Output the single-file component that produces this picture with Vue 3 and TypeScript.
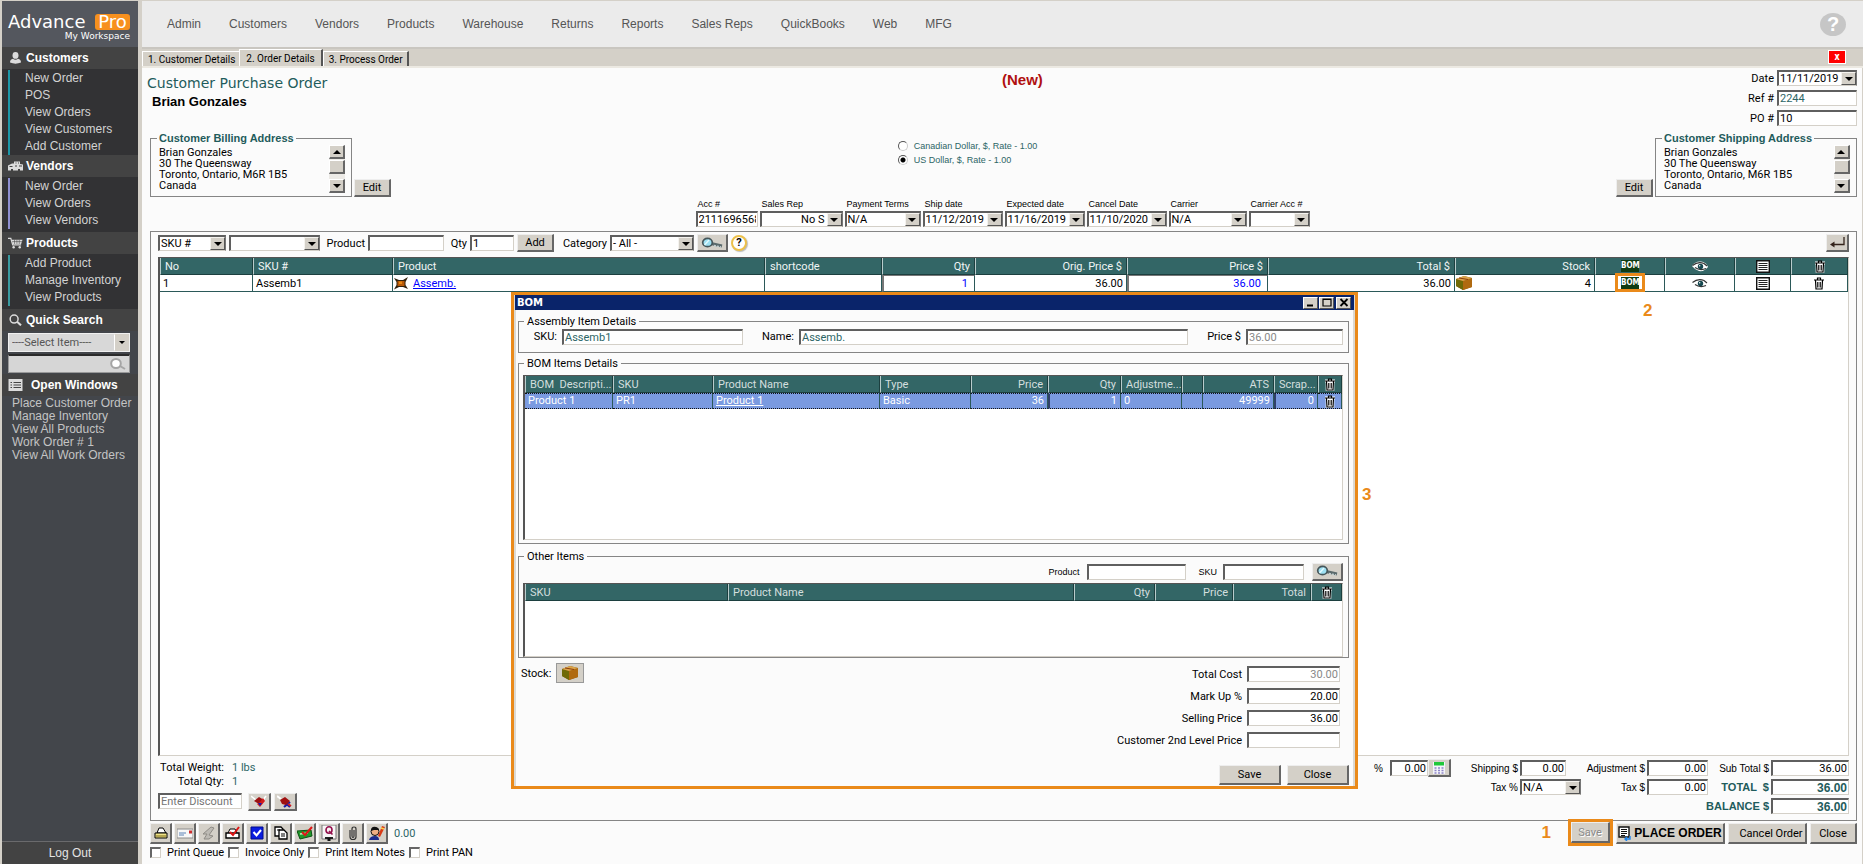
<script setup lang="ts">
import { ref } from 'vue'

interface MenuGroup { title: string; icon: string; tone: string; items: string[] }
interface HeadField { id: string; label: string; value: string; width: number; combo: boolean; right?: boolean }
interface Column { label: string; width?: number; right?: boolean; icon?: string }

const navItems: string[] = ['Admin', 'Customers', 'Vendors', 'Products', 'Warehouse', 'Returns', 'Reports', 'Sales Reps', 'QuickBooks', 'Web', 'MFG']

const groups: MenuGroup[] = [
  { title: 'Customers', icon: 'i-person', tone: 'teal', items: ['New Order', 'POS', 'View Orders', 'View Customers', 'Add Customer'] },
  { title: 'Vendors', icon: 'i-vendor', tone: 'violet', items: ['New Order', 'View Orders', 'View Vendors'] },
  { title: 'Products', icon: 'i-cart', tone: 'aqua', items: ['Add Product', 'Manage Inventory', 'View Products'] },
]

const openWindows: string[] = ['Place Customer Order', 'Manage Inventory', 'View All Products', 'Work Order # 1', 'View All Work Orders']

const address: string = ['Brian Gonzales', '30 The Queensway', 'Toronto, Ontario, M6R 1B5', 'Canada'].join('\n')

const headFields: HeadField[] = [
  { id: 'acc', label: 'Acc #', value: '2111696568', width: 62, combo: false },
  { id: 'rep', label: 'Sales Rep', value: 'No S', width: 83, combo: true, right: true },
  { id: 'terms', label: 'Payment Terms', value: 'N/A', width: 76, combo: true },
  { id: 'ship', label: 'Ship date', value: '11/12/2019', width: 80, combo: true },
  { id: 'expected', label: 'Expected date', value: '11/16/2019', width: 80, combo: true },
  { id: 'cancel', label: 'Cancel Date', value: '11/10/2020', width: 80, combo: true },
  { id: 'carrier', label: 'Carrier', value: 'N/A', width: 78, combo: true },
  { id: 'carrieracc', label: 'Carrier Acc #', value: '', width: 61, combo: true },
]

const orderCols: Column[] = [
  { label: 'No', width: 93 }, { label: 'SKU #', width: 140 }, { label: 'Product' }, { label: 'shortcode', width: 117 },
  { label: 'Qty', width: 93, right: true }, { label: 'Orig. Price $', width: 152, right: true }, { label: 'Price $', width: 141, right: true },
  { label: 'Total $', width: 187, right: true }, { label: 'Stock', width: 140, right: true }, { label: 'BOM', width: 70, icon: 'bom' },
  { label: '', width: 70, icon: 'i-eye' }, { label: '', width: 56, icon: 'i-list' }, { label: '', width: 57, icon: 'i-trash' },
]

const bomCols: Column[] = [
  { label: 'BOM  Descripti...', width: 88 }, { label: 'SKU', width: 100 }, { label: 'Product Name' }, { label: 'Type', width: 91 },
  { label: 'Price', width: 77, right: true }, { label: 'Qty', width: 73, right: true }, { label: 'Adjustme...', width: 61 }, { label: '', width: 21 },
  { label: 'ATS', width: 71, right: true }, { label: 'Scrap...', width: 44, right: true }, { label: '', width: 24, icon: 'i-trash' },
]

const otherCols: Column[] = [
  { label: 'SKU', width: 203 }, { label: 'Product Name' }, { label: 'Qty', width: 81, right: true },
  { label: 'Price', width: 78, right: true }, { label: 'Total', width: 78, right: true }, { label: '', width: 31, icon: 'i-trash' },
]

const costs = [
  { id: 'cost', label: 'Total Cost', value: '30.00', off: true },
  { id: 'markup', label: 'Mark Up %', value: '20.00', off: false },
  { id: 'selling', label: 'Selling Price', value: '36.00', off: false },
  { id: 'second', label: 'Customer 2nd Level Price', value: '', off: false },
]

const tools: string[] = ['t-print', 't-mail', 't-edit', 't-printx', 't-check', 't-copy', 't-money', 't-query', 't-clip', 't-user']
const prints: string[] = ['Print Queue', 'Invoice Only', 'Print Item Notes', 'Print PAN']
const currency = ref<string>('usd')
</script>

<template>
  <svg class="defs" aria-hidden="true">
    <symbol id="i-person" viewBox="0 0 12 12"><ellipse cx="6" cy="3.4" rx="3" ry="3.4" /><path d="M0.500 10.500Q0.500 7.200 3.500 6.800Q6 8.500 8.500 6.800Q11.500 7.200 11.500 10.500Q6 12.800 0.500 10.500Z" /></symbol>
    <symbol id="i-vendor" viewBox="0 0 15 11"><path d="M0 5L4 3H6V1H12V3.500L15 4V10H12V8.500H10V10H5V8.500H3V10H0Z" /><path d="M7.500 2.500h1M10 2.500h1M1.500 6h3M7 5.500h2M11 5.500h3" stroke="#434343" fill="none" /></symbol>
    <symbol id="i-cart" viewBox="0 0 16 12"><path d="M0 1H3L5 8H14" stroke="currentColor" stroke-width="1.300" fill="none" /><path d="M4 2.500H15.500L14 7H5Z" /><path d="M7 2.500V7M9.500 2.500V7M12 2.500V7M4.500 4.500H15" stroke="#434343" stroke-width=".6" /><circle cx="6" cy="10.500" r="1.300" /><circle cx="12.500" cy="10.500" r="1.300" /></symbol>
    <symbol id="i-find" viewBox="0 0 14 13"><circle cx="5.500" cy="5.500" r="4.300" fill="none" stroke="currentColor" stroke-width="1.600" /><path d="M8.700 8.500L13 12.300" stroke="currentColor" stroke-width="2.200" /></symbol>
    <symbol id="i-quick" viewBox="0 0 16 12"><ellipse cx="6" cy="5.500" rx="4.800" ry="4.500" fill="#fff" stroke="#a5a5a5" stroke-width="2" /><path d="M10 8L15 11" stroke="#a5a5a5" stroke-width="2" /></symbol>
    <symbol id="i-windows" viewBox="0 0 14 12"><path d="M0 0H14V12H0Z" /><path d="M2 3.500h1.500M5 3.500h7.500M2 6h1.500M5 6h7.500M2 8.500h1.500M5 8.500h7.500" stroke="#444" stroke-width="1.200" /></symbol>
    <symbol id="i-trash" viewBox="0 0 11 13"><path d="M0.500 1.500H10.500V4.500H9.800V12.800H1.200V4.500H0.500Z" fill="#fff" /><path d="M0.500 3H10.500M4 2.500V1H7V2.500M2 3.500L2.500 12H8.500L9 3.500M4.300 5V10.500M6.700 5V10.500" fill="none" stroke="#000" stroke-width="1.200" /></symbol>
    <symbol id="i-eye" viewBox="0 0 16 11"><path d="M0 5Q3 0 9 0.500Q14 1 16 6Q12 11 7 10Q3 9 0 5Z" fill="#fff" /><path d="M0.500 4.500Q6 0 12 2.500L15 5M3 6.500Q8 10 14 7.500" fill="none" stroke="#333" stroke-width="1.200" /><circle cx="8.500" cy="5.500" r="2.700" fill="#16484f" /><circle cx="7.700" cy="4.700" r=".7" fill="#fff" /></symbol>
    <symbol id="i-list" viewBox="0 0 14 13"><path d="M.7 .7H13.300V12.300H.7Z" fill="#fff" stroke="#111" stroke-width="1.400" /><path d="M2.500 3.500h9M2.500 5.500h9M2.500 7.500h9M2.500 9.500h9" stroke="#222" /></symbol>
    <symbol id="i-box" viewBox="0 0 16 14"><path d="M0 3L8 0L16 2V11L7 14L0 10Z" fill="#8a5a0c" /><path d="M0 3L7 5V14L0 10Z" fill="#6f6a08" /><path d="M7 5L16 2V11L7 14Z" fill="#b06a10" /><path d="M0 3L8 0L16 2L7 5Z" fill="#dca54c" /><path d="M3 2L12 3.500" stroke="#8a3d0c" /></symbol>
    <symbol id="i-burst" viewBox="0 0 14 13"><path d="M0 1L5 3H9L14 0L11.500 5V8L14 12L9 10H5L0 12.500L2.500 8V5Z" fill="#32210c" /><path d="M3.500 4H10.500V9H3.500Z" fill="#b95a08" /><path d="M5 4.500H8V7H5Z" fill="#e88712" /></symbol>
    <symbol id="i-lens" viewBox="0 0 22 12"><path d="M10 6.500L21 9" stroke="#5b6a6c" stroke-width="3" /><path d="M13 8.500L20 10" stroke="#c5d1d2" stroke-width="1.500" stroke-dasharray="2 1" /><ellipse cx="6.500" cy="5.500" rx="4.800" ry="4.200" fill="#9ee0f2" stroke="#46565a" stroke-width="1.700" /><path d="M3.500 8L8 3" stroke="#e4fbff" stroke-width="1.300" /></symbol>
    <symbol id="i-return" viewBox="0 0 16 11"><path d="M15 0V7.500H3" fill="none" stroke="#33231b" stroke-width="1.300" /><path d="M5.500 4.500L1 7.500L5.500 10.500Z" fill="#33231b" /></symbol>
    <symbol id="i-tag1" viewBox="0 0 16 13"><path d="M0 1L5 5M15 1L12 5" stroke="#fff" stroke-width="1.600" /><path d="M3 6L8 2L13 5L8 9Z" fill="#9b1010" /><path d="M6 9L9 12L14 6L12 3L9 7Z" fill="#d41b1b" /><path d="M7 8L9 11L11 8Z" fill="#1818ae" /></symbol>
    <symbol id="i-tag2" viewBox="0 0 16 13"><path d="M0 1L4 4" stroke="#fff" stroke-width="2" /><path d="M7 7L13 12M13 7L7 12" stroke="#1b1ba5" stroke-width="2.200" /><path d="M3 5L8 2L13 6L9 10L5 9Z" fill="#a01010" /><path d="M11 9L14 11" stroke="#d41b1b" stroke-width="2" /></symbol>
    <symbol id="i-calc" viewBox="0 0 12 12"><path d="M0 0H12V12H0Z" fill="#f4f4fa" /><path d="M1 0H11V3.500H1Z" fill="#1fc83a" /><path d="M1.500 6H10.500M1.500 8.500H10.500M1.500 11H10.500" stroke="#8e86c8" stroke-width="1.500" stroke-dasharray="2 1.500" /></symbol>
    <symbol id="i-order" viewBox="0 0 13 15"><path d="M1 1H11V11H1Z" fill="#fff" stroke="#111" stroke-width="1.400" /><path d="M3 3.500h6M3 5.500h6M3 7.500h6M3 9.500h4" stroke="#111" /><path d="M12 10V13H7M9 11L7 13L9 15" fill="none" stroke="#1d83ea" stroke-width="1.400" /></symbol>
    <symbol id="t-print" viewBox="0 0 16 16"><path d="M4 8L6 3H10L13 8Z" fill="#fff" stroke="#000" /><path d="M2 8H14V13H2Z" fill="#efe388" stroke="#000" /><path d="M3 11h10" stroke="#7d6b18" /></symbol>
    <symbol id="t-mail" viewBox="0 0 16 16"><path d="M0 4H16V13H0Z" fill="#f7f7f7" stroke="#8c8c8c" /><path d="M2 8h7M2 10h5" stroke="#5b82b6" /><path d="M12 5.500h3v3h-3Z" fill="#cc2f2f" /></symbol>
    <symbol id="t-edit" viewBox="0 0 16 16"><path d="M2 9L10 2L13 3L8 10L12 11L8 14H3L6 9Z" fill="#bdbab4" stroke="#8f8c86" /></symbol>
    <symbol id="t-printx" viewBox="0 0 16 16"><path d="M3 8L5 4H10L12 8" fill="#fff" stroke="#000" /><path d="M1 8H14V13H1Z" fill="#fff" stroke="#000" stroke-width="1.400" /><path d="M5 7L8 10L14 2" fill="none" stroke="#dd1515" stroke-width="2" /></symbol>
    <symbol id="t-check" viewBox="0 0 16 16"><path d="M2 2H14V14H2Z" fill="#0a1de0" stroke="#000b8c" /><path d="M4.500 7L7.500 10.500L12 5" fill="none" stroke="#fff" stroke-width="2" /></symbol>
    <symbol id="t-copy" viewBox="0 0 16 16"><path d="M2 2H8L10 4V11H2Z" fill="#fff" stroke="#000" stroke-width="1.300" /><path d="M6 5H11L14 8V14H6Z" fill="#fff" stroke="#000" stroke-width="1.300" /><path d="M8 9h4M8 11h4M4 5h3" stroke="#000" /></symbol>
    <symbol id="t-money" viewBox="0 0 16 16"><path d="M0 6L14 5L15 11L3 14Z" fill="#1f9a2a" stroke="#0b5312" /><path d="M3 9L11 8" stroke="#c6ecc0" stroke-width="1.600" /><path d="M5 7L8 10L15 2" fill="none" stroke="#dd1515" stroke-width="2" /></symbol>
    <symbol id="t-query" viewBox="0 0 16 16"><path d="M1 0H15V14H1Z" fill="#f8f6f6" stroke="#777" /><ellipse cx="8" cy="5" rx="3" ry="3.200" fill="none" stroke="#94104c" stroke-width="1.600" /><path d="M8 6L11.500 9.500" stroke="#94104c" stroke-width="1.600" /><path d="M4 12H12V14H4Z" fill="#222" /><path d="M8 13v3" stroke="#111" stroke-width="3" /></symbol>
    <symbol id="t-clip" viewBox="0 0 16 16"><path d="M5 5V12Q5 14.500 8 14.500Q11 14.500 11 12V4Q11 2 9 2Q7 2 7 4V11Q7 12.500 8 12.500Q9 12.500 9 11V5" fill="none" stroke="#333" stroke-width="1.200" /></symbol>
    <symbol id="t-user" viewBox="0 0 16 16"><ellipse cx="6" cy="6.500" rx="4" ry="4" fill="#f0b083" stroke="#111" /><path d="M2 6Q2 1 7 2Q10 3 10 5L5 5Z" fill="#111" /><path d="M0 15Q1 11 6 11Q10 11 10 15Z" fill="#1c2c8e" /><path d="M9 11L13 1L16 2L11 12Z" fill="#d93a16" /><path d="M12 3L15 4" stroke="#ffd24a" stroke-width="1.500" /></symbol>
  </svg>

  <div class="app">
    <aside class="side">
      <header class="brand">
        <div class="logo">Advance<span class="pro">Pro</span></div>
        <div class="workspace">My Workspace</div>
      </header>
      <section v-for="g in groups" :key="g.title">
        <h2 class="side-head"><svg class="side-icon"><use :href="'#' + g.icon" /></svg>{{ g.title }}</h2>
        <ul class="menu" :class="g.tone">
          <li v-for="item in g.items" :key="item"><a href="#">{{ item }}</a></li>
        </ul>
      </section>
      <h2 class="side-head"><svg class="side-icon"><use href="#i-find" /></svg>Quick Search</h2>
      <div class="quick">
        <span class="combo quick-combo"><select aria-label="Quick search type"><option>----Select Item----</option></select><i class="arrow" /></span>
        <div class="quick-text"><input type="text" aria-label="Quick search text"><svg><use href="#i-quick" /></svg></div>
      </div>
      <h2 class="side-head windows-head"><svg class="side-icon"><use href="#i-windows" /></svg>Open Windows</h2>
      <ul class="windows"><li v-for="w in openWindows" :key="w"><a href="#">{{ w }}</a></li></ul>
      <button class="logout">Log Out</button>
    </aside>

    <main class="main">
      <nav class="nav">
        <a v-for="n in navItems" :key="n" href="#">{{ n }}</a>
        <button class="help" aria-label="Help">?</button>
      </nav>
      <div class="tabs">
        <button class="tab">1. Customer Details</button>
        <button class="tab active">2. Order Details</button>
        <button class="tab last">3. Process Order</button>
        <button class="tab-close" aria-label="Close tab">x</button>
      </div>

      <div class="page">
        <div class="top">
          <div class="titles"><h1>Customer Purchase Order</h1><strong>Brian Gonzales</strong></div>
          <div class="status">(New)</div>
          <div class="refs">
            <label for="date">Date</label><span class="combo"><select id="date"><option>11/11/2019</option></select><i class="arrow" /></span>
            <label for="ref">Ref #</label><input id="ref" class="box teal-text" type="text" value="2244">
            <label for="po">PO #</label><input id="po" class="box" type="text" value="10">
          </div>
        </div>

        <div class="addresses">
          <div class="address">
            <fieldset class="group">
              <legend>Customer Billing Address</legend>
              <div class="address-body"><textarea aria-label="Billing address" readonly :value="address" /><div class="scroll"><i class="up" /><b /><i class="down" /></div></div>
            </fieldset>
            <button class="btn edit">Edit</button>
          </div>
          <div class="currencies">
            <label><input v-model="currency" type="radio" value="cad">Canadian Dollar, $, Rate - 1.00</label>
            <label><input v-model="currency" type="radio" value="usd">US Dollar, $, Rate - 1.00</label>
          </div>
          <div class="address">
            <button class="btn edit">Edit</button>
            <fieldset class="group">
              <legend>Customer Shipping Address</legend>
              <div class="address-body"><textarea aria-label="Shipping address" readonly :value="address" /><div class="scroll"><i class="up" /><b /><i class="down" /></div></div>
            </fieldset>
          </div>
        </div>

        <div class="head-fields">
          <div v-for="f in headFields" :key="f.id" :style="{ width: f.width + 'px' }">
            <label :for="f.id">{{ f.label }}</label>
            <span v-if="f.combo" class="combo"><select :id="f.id" :class="{ right: f.right }"><option>{{ f.value }}</option></select><i class="arrow" /></span>
            <input v-else :id="f.id" class="box" type="text" :value="f.value">
          </div>
        </div>

        <section class="order">
          <div class="filter">
            <span class="combo"><select aria-label="Search field"><option>SKU #</option></select><i class="arrow" /></span>
            <span class="combo"><select aria-label="Search value"><option /></select><i class="arrow" /></span>
            <label for="product">Product</label><input id="product" class="box" type="text">
            <label for="qty">Qty</label><input id="qty" class="box" type="text" value="1">
            <button class="btn">Add</button>
            <label for="category">Category</label>
            <span class="combo"><select id="category"><option>- All -</option></select><i class="arrow" /></span>
            <button class="btn" aria-label="Search"><svg class="lens"><use href="#i-lens" /></svg></button>
            <button class="hint" aria-label="Hint">?</button>
            <button class="btn return" aria-label="Enter"><svg><use href="#i-return" /></svg></button>
          </div>

          <div class="grid-wrap">
            <table class="grid">
              <colgroup><col v-for="(c, i) in orderCols" :key="i" :style="c.width ? { width: c.width + 'px' } : {}"></colgroup>
              <thead>
                <tr>
                  <th v-for="(c, i) in orderCols" :key="i" :class="{ right: c.right, mid: c.icon }">
                    <span v-if="c.icon === 'bom'" class="bom">BOM</span>
                    <svg v-else-if="c.icon" class="cell-icon"><use :href="'#' + c.icon" /></svg>
                    <template v-else>{{ c.label }}</template>
                  </th>
                </tr>
              </thead>
              <tbody>
                <tr>
                  <td>1</td><td>Assemb1</td>
                  <td><span class="product"><svg><use href="#i-burst" /></svg><a href="#">Assemb.</a></span></td>
                  <td /><td class="right blue sunk">1</td><td class="right">36.00</td><td class="right blue sunk">36.00</td><td class="right">36.00</td>
                  <td><span class="stock"><svg><use href="#i-box" /></svg>4</span></td>
                  <td class="mid callout-cell"><span class="callout"><span class="bom">BOM</span></span><span class="mark mark-two">2</span></td>
                  <td class="mid"><svg class="cell-icon"><use href="#i-eye" /></svg></td>
                  <td class="mid"><svg class="cell-icon"><use href="#i-list" /></svg></td>
                  <td class="mid"><svg class="cell-icon"><use href="#i-trash" /></svg></td>
                </tr>
              </tbody>
            </table>
          </div>

          <div class="summary">
            <div class="weights">
              <dl><dt>Total Weight:</dt><dd>1 lbs</dd><dt>Total Qty:</dt><dd>1</dd></dl>
              <div class="discount">
                <input class="box" type="text" placeholder="Enter Discount" aria-label="Discount">
                <button class="btn" aria-label="Apply discount"><svg><use href="#i-tag1" /></svg></button>
                <button class="btn" aria-label="Remove discount"><svg><use href="#i-tag2" /></svg></button>
              </div>
            </div>
            <div class="totals">
              <label for="pct">%</label><input id="pct" class="box" type="text" value="0.00">
              <button class="btn calc" aria-label="Calculate"><svg><use href="#i-calc" /></svg></button>
              <label for="shipping">Shipping $</label><input id="shipping" class="box short" type="text" value="0.00">
              <label for="adj">Adjustment $</label><input id="adj" class="box" type="text" value="0.00">
              <label for="sub">Sub Total $</label><input id="sub" class="box" type="text" value="36.00">
              <label class="tax-rate" for="taxp">Tax %</label><span class="combo"><select id="taxp"><option>N/A</option></select><i class="arrow" /></span>
              <label for="tax">Tax $</label><input id="tax" class="box" type="text" value="0.00">
              <label class="strong total-label" for="total">TOTAL &nbsp;$</label><input id="total" class="box strong" type="text" value="36.00">
              <label class="strong balance" for="balance">BALANCE $</label><input id="balance" class="box strong" type="text" value="36.00">
            </div>
          </div>
        </section>

        <footer class="footer">
          <div>
            <div class="tools">
              <button v-for="t in tools" :key="t" class="btn" :aria-label="t.slice(2)"><svg><use :href="'#' + t" /></svg></button>
              <output>0.00</output>
            </div>
            <div class="prints"><label v-for="p in prints" :key="p"><input type="checkbox">{{ p }}</label></div>
          </div>
          <div class="actions">
            <span class="mark">1</span>
            <span class="callout save-callout"><button class="btn" disabled>Save</button></span>
            <button class="btn place"><svg><use href="#i-order" /></svg>PLACE ORDER</button>
            <button class="btn cancel">Cancel Order</button>
            <button class="btn close">Close</button>
          </div>
        </footer>
      </div>
    </main>

    <section class="dialog" role="dialog" aria-label="BOM">
      <span class="mark mark-three">3</span>
      <header class="titlebar">
        <span>BOM</span>
        <button class="win" aria-label="Minimize"><svg viewBox="0 0 10 9"><path d="M1 7.500H7" stroke="#000" stroke-width="2" /></svg></button>
        <button class="win" aria-label="Maximize"><svg viewBox="0 0 10 9"><path d="M1 1H9V8H1ZM1 1.500H9" fill="none" stroke="#000" stroke-width="1.200" /></svg></button>
        <button class="win last" aria-label="Close window"><svg viewBox="0 0 10 9"><path d="M1.500 1L8.500 8M8.500 1L1.500 8" stroke="#000" stroke-width="1.800" /></svg></button>
      </header>
      <fieldset class="group assembly">
        <legend>Assembly Item Details</legend>
        <div class="assembly-row">
          <label for="a-sku">SKU:</label><input id="a-sku" class="box teal-text" type="text" value="Assemb1" readonly>
          <label for="a-name">Name:</label><input id="a-name" class="box teal-text" type="text" value="Assemb." readonly>
          <label for="a-price">Price $</label><input id="a-price" class="box off" type="text" value="36.00" readonly>
        </div>
      </fieldset>
      <fieldset class="group items">
        <legend>BOM Items Details</legend>
        <div class="grid-wrap">
          <table class="grid">
            <colgroup><col v-for="(c, i) in bomCols" :key="i" :style="c.width ? { width: c.width + 'px' } : {}"></colgroup>
            <thead>
              <tr>
                <th v-for="(c, i) in bomCols" :key="i" :class="{ right: c.right, mid: c.icon }">
                  <svg v-if="c.icon" class="cell-icon"><use :href="'#' + c.icon" /></svg><template v-else>{{ c.label }}</template>
                </th>
              </tr>
            </thead>
            <tbody>
              <tr class="selected">
                <td>Product 1</td><td>PR1</td><td><a href="#">Product 1</a></td><td>Basic</td><td class="right">36</td><td class="right sunk">1</td>
                <td>0</td><td /><td class="right">49999</td><td class="right sunk">0</td><td class="mid"><svg class="cell-icon"><use href="#i-trash" /></svg></td>
              </tr>
            </tbody>
          </table>
        </div>
      </fieldset>
      <fieldset class="group others">
        <legend>Other Items</legend>
        <div class="other-search">
          <label for="o-product">Product</label><input id="o-product" class="box" type="text">
          <label for="o-sku">SKU</label><input id="o-sku" class="box" type="text">
          <button class="btn" aria-label="Search items"><svg class="lens"><use href="#i-lens" /></svg></button>
        </div>
        <div class="grid-wrap">
          <table class="grid">
            <colgroup><col v-for="(c, i) in otherCols" :key="i" :style="c.width ? { width: c.width + 'px' } : {}"></colgroup>
            <thead>
              <tr>
                <th v-for="(c, i) in otherCols" :key="i" :class="{ right: c.right, mid: c.icon }">
                  <svg v-if="c.icon" class="cell-icon"><use :href="'#' + c.icon" /></svg><template v-else>{{ c.label }}</template>
                </th>
              </tr>
            </thead>
          </table>
        </div>
      </fieldset>
      <div class="dialog-foot">
        <div class="dialog-stock"><span>Stock:</span><button aria-label="Stock"><svg><use href="#i-box" /></svg></button></div>
        <div class="costs">
          <template v-for="c in costs" :key="c.id">
            <label :for="c.id">{{ c.label }}</label><input :id="c.id" class="box" :class="{ off: c.off }" type="text" :value="c.value" :readonly="c.off">
          </template>
        </div>
      </div>
      <div class="dialog-actions"><button class="btn">Save</button><button class="btn">Close</button></div>
    </section>
  </div>
</template>

<style>
body { background: #fbfbfb; }
</style>

<style scoped>
* { box-sizing: border-box; }
.defs { position: absolute; width: 0; height: 0; }
.app {
  position: relative; display: flex; min-height: 100vh; border-top: 1px solid #d4d0c8; border-left: 2px solid #d4d0c8;
  background: #fbfbfb; color: #000; font: 11px/13px Roboto, "Liberation Sans", sans-serif;
}
button, input, select, textarea { margin: 0; padding: 0; border: 0; border-radius: 0; background: none; color: inherit; font: inherit; outline: 0; }
a { color: inherit; text-decoration: none; }
h1, h2, ul, dl, dd { margin: 0; padding: 0; }
ul { list-style: none; }

/* sidebar */
.side { flex: none; display: flex; flex-direction: column; width: 136px; background: #43464b; color: #d3d3d3; font: 12px/17px "Liberation Sans", Arial, sans-serif; }
.brand { height: 46px; padding: 12px 8px 0 6px; background: #54575e; color: #fff; }
.logo { display: flex; align-items: center; justify-content: space-between; height: 17px; font: 18px/16px "DejaVu Sans", sans-serif; }
.pro { width: 35px; border-radius: 3px; background: #f7901e; text-align: center; }
.workspace { font: 9px/12px "DejaVu Sans", sans-serif; text-align: right; }
.side-head { display: flex; align-items: center; gap: 3px; height: 22px; padding-left: 6px; background: #434343; color: #fff; font-size: 12px; }
.side-icon { width: 15px; height: 12px; fill: #dcdcdc; color: #dcdcdc; }
.menu { padding: 1px 0 0 6px; background: #323234; }
.menu li { height: 17px; padding-left: 15px; border-left: 2px solid #1d98a8; }
.menu.violet { padding-bottom: 3px; }
.menu.aqua { padding-bottom: 3px; }
.menu.violet li { border-color: #8f8fd0; }
.menu.aqua li { border-color: #3a9ba0; }
.quick { padding: 2px 8px 1px 6px; }
.quick-text { display: flex; align-items: center; height: 19px; margin-top: 2px; border: 1px solid #999; border-top: 2px solid #2a2a2a; background: #d6d6d6; color: #a5a5a5; }
.quick-text input { flex: 1; min-width: 0; color: #333; }
.quick-text svg { width: 16px; height: 12px; margin-right: 3px; }
.windows-head { gap: 8px; margin-bottom: 1px; }
.windows { padding-left: 10px; line-height: 13px; white-space: nowrap; color: #c4c4c4; }
.logout { height: 23px; margin-top: auto; border-top: 1px solid #6a6a6c; background: #434343; color: #e4e4e4; }

/* main frame */
.main { flex: 1; min-width: 0; display: flex; flex-direction: column; border-left: 4px solid #d4d0c8; }
.nav { display: flex; align-items: center; gap: 28px; height: 46px; padding: 0 17px 0 25px; background: #ebebeb; color: #555; font: 12px/16px "Liberation Sans", Arial, sans-serif; }
.help { width: 26px; height: 23px; margin-left: auto; border-radius: 50%; background: #c6c6c6; color: #fff; font-size: 20px; font-weight: bold; }
.tabs { display: flex; align-items: flex-end; height: 21px; padding: 2px 17px 0 0; border-top: 2px solid #c9c6c0; border-bottom: 2px solid #ece9e2; background: #d4d0c8; font-size: 10px; }
.tab { height: 15px; padding: 0 4px 0 5px; border-top: 1px solid #fff; border-left: 1px solid #fff; white-space: nowrap; }
.tab.active { height: 17px; padding: 0 6px; border-right: 2px solid #555; }
.tab.last { border-right: 2px solid #555; }
.tab-close { width: 18px; height: 14px; margin: 0 0 2px auto; border: 1px solid #fff; background: #f00; color: #fff; font-size: 10px; line-height: 10px; font-weight: bold; }
.page { flex: 1; display: flex; flex-direction: column; padding: 0 5px 2px 8px; border-right: 1px solid #d4d0c8; }

/* shared controls */
.box, .combo { display: block; width: 100%; height: 16px; border: 1px solid #d4d0c8; border-top: 2px solid #5f5f5f; border-left: 2px solid #5f5f5f; background: #fff; }
.box { padding: 0 1px; }
.combo { display: grid; border-right: 1px solid #777; }
.combo > * { grid-area: 1 / 1; }
.combo select { appearance: none; width: 100%; min-width: 0; height: 13px; padding: 0 17px 0 1px; line-height: 13px; }
.arrow { justify-self: end; display: grid; place-items: center; width: 15px; height: 13px; border: 1px solid #f5f3ef; border-right-color: #555; border-bottom-color: #555; background: #d4d0c8; pointer-events: none; }
.arrow::after, .scroll i::after { content: ""; border: 4px solid transparent; border-top-color: #000; border-bottom: 0; }
.btn { display: flex; align-items: center; justify-content: center; height: 18px; border: 1px solid #eee; border-right: 2px solid #666; border-bottom: 2px solid #666; background: #d4d0c8; white-space: nowrap; }
.btn:disabled { color: #8a8a8a; text-shadow: 1px 1px #fff; }
.right { text-align: right; }
.teal-text, dd, output { color: #2d6666; }
.off { color: #888; }
.quick-combo { height: 19px; border: 1px solid #f0f0f0; background: #d8d8d8; color: #555; }
.quick-combo select { height: 17px; padding-left: 3px; font: 11px/17px Roboto, sans-serif; }
.quick-combo .arrow { height: 17px; border-color: #d4d0c8 #d4d0c8 #d4d0c8 #fff; }
.quick-combo .arrow::after { border-width: 3px 3px 0; }
.group { min-width: 0; margin: 0; padding: 0; border: 1px solid #858585; }
.lens { width: 22px; height: 12px; }
.mark { color: #ea8a1a; font: bold 17px/20px "Liberation Sans", Arial, sans-serif; }
.callout { border: 3px solid #ea8a1a; }

/* order heading */
.top { display: grid; grid-template-columns: 1fr 1fr auto; height: 64px; padding-top: 2px; }
.titles h1 { margin: 5px 0 0 -3px; color: #1f5c5c; font: 14px/16px "DejaVu Sans", sans-serif; }
.titles strong { display: block; margin: 3px 0 0 2px; font: bold 13px/16px "Liberation Sans", Arial, sans-serif; }
.status { padding: 1px 0 0 53px; color: #b01010; font: bold 15px/18px "Liberation Sans", Arial, sans-serif; }
.refs { display: grid; grid-template-columns: auto 80px; grid-auto-rows: 16px; align-items: center; gap: 4px 3px; text-align: right; }
.addresses { display: flex; justify-content: space-between; height: 67px; }
.address { display: flex; align-items: flex-end; gap: 2px; height: 65px; }
.address .group { width: 202px; height: 65px; }
.address legend { margin-left: 6px; padding: 0 2px; color: #1f5c5c; font: bold 11px/13px "Liberation Sans", Arial, sans-serif; }
.address-body { display: flex; justify-content: space-between; padding: 0 6px 0 8px; }
.address textarea { flex: 1; height: 48px; padding-top: 2px; resize: none; overflow: hidden; line-height: 11px; }
.scroll { display: flex; flex-direction: column; justify-content: space-between; width: 16px; height: 48px; background: #eceae6; }
.scroll i, .scroll b { display: grid; place-items: center; height: 14px; border: 1px solid #fff; border-right: 2px solid #666; border-bottom: 2px solid #666; background: #d4d0c8; }
.scroll b { margin-bottom: 4px; }
.scroll .up::after { transform: rotate(180deg); }
.edit { width: 37px; }
.currencies { padding: 7px 72px 0 0; color: #2d6666; font: 9px/14px "Liberation Sans", Arial, sans-serif; }
.currencies label { display: flex; align-items: center; gap: 6px; height: 14px; }
.currencies input { appearance: none; width: 10px; height: 10px; border: 1px solid #555; border-right-color: #ccc; border-bottom-color: #ccc; border-radius: 50%; background: #fff; }
.currencies input:checked { background: radial-gradient(circle, #000 2px, #fff 3px); }
.head-fields { display: flex; justify-content: center; gap: 2px; margin-bottom: 4px; padding-right: 2px; }
.head-fields label { display: block; height: 12px; padding-left: 2px; white-space: nowrap; font: 9px/11px "Liberation Sans", Arial, sans-serif; }

/* order grid */
.order { flex: 1; display: flex; flex-direction: column; padding: 2px 7px 4px; border: 1px solid #858585; }
.filter { display: grid; grid-template-columns: 68px 91px 42px 76px 20px 44px 37px 50px 84px 31px 16px 1fr; gap: 3px; align-items: center; height: 18px; margin-bottom: 5px; }
.filter label { text-align: right; }
.hint { width: 16px; height: 16px; border: 2px solid #ecc04a; border-radius: 50%; background: #fff; font-weight: bold; line-height: 12px; box-shadow: 1px 1px 1px #bbb; }
.return { justify-self: end; width: 23px; }
.return svg { width: 16px; height: 11px; }
.grid-wrap { flex: 1; border: 1px solid #d4d0c8; border-top: 1px solid #555; border-left: 2px solid #555; background: #fff; }
.grid { width: 100%; table-layout: fixed; border-collapse: separate; border-spacing: 0; }
.grid th { height: 17px; padding: 0 4px; border-right: 1px solid #1c3f3f; border-left: 1px solid #b9cccc; border-bottom: 1px solid #1c3f3f; background: #336666; color: #f0f5f5; font-weight: normal; text-align: left; white-space: pre; overflow: hidden; }
.grid td { height: 17px; padding: 0 3px; border-right: 1px solid #2b5959; border-bottom: 1px solid #2b5959; white-space: nowrap; }
.grid th.right { text-align: right; }
.grid .mid { padding: 0; text-align: center; }
.grid td.sunk { border-top: 1px solid #777; border-left: 2px solid #777; }
.grid td.blue { padding-right: 6px; color: #00f; }
.cell-icon { display: block; width: 16px; height: 13px; margin: auto; }
.product { display: flex; align-items: center; gap: 5px; height: 16px; }
.product svg { width: 14px; height: 13px; margin-left: -2px; }
.product a { color: #00f; text-decoration: underline; }
.stock { display: flex; align-items: center; justify-content: space-between; height: 16px; }
.stock svg { width: 16px; height: 14px; margin-left: -2px; }
.bom { display: block; width: 18px; height: 12px; margin: auto; background: #103c12; color: #fff; font: bold 8px/12px "Liberation Sans Narrow", "DejaVu Sans Condensed", "Liberation Sans", sans-serif; text-align: center; }
.callout-cell { position: relative; }
.callout-cell .callout { position: absolute; left: 20px; top: -2px; display: grid; place-items: center; width: 30px; height: 19px; }
.mark-two { position: absolute; left: 48px; top: 26px; }

/* totals */
.summary { display: flex; justify-content: space-between; height: 60px; padding-top: 3px; }
.weights dl { display: grid; grid-template-columns: 66px auto; gap: 1px 8px; margin-top: 2px; line-height: 13px; }
.weights dt { text-align: right; }
.discount { display: flex; gap: 3px; margin-top: 5px; }
.discount .box { width: 84px; margin-right: 3px; }
.discount .btn { width: 23px; }
.discount svg { width: 16px; height: 13px; }
.totals { display: grid; grid-template-columns: 16px 38px 23px 69px 61px 66px 61px 63px 78px; grid-template-rows: 18px 18px 18px; row-gap: 1px; align-items: center; text-align: right; }
.totals label { padding-right: 2px; white-space: nowrap; font: 10px/13px "Liberation Sans", Arial, sans-serif; }
.totals label:first-child { padding-right: 8px; }
.totals .box { text-align: right; }
.totals .short { width: 46px; }
.tax-rate { grid-column: 4; }
.calc svg { width: 12px; height: 12px; }
.totals .strong { color: #1f5c5c; font: bold 12px/13px "Liberation Sans", Arial, sans-serif; }
.totals label.strong { font-size: 11px; }
.totals label.balance { grid-column: 7 / span 2; }

/* footer */
.footer { display: flex; justify-content: space-between; height: 41px; padding-top: 1px; }
.tools { display: flex; align-items: center; gap: 2px; padding-top: 1px; }
.tools .btn { width: 22px; height: 21px; }
.tools svg { width: 16px; height: 16px; }
.tools output { margin-left: 4px; }
.prints { display: flex; gap: 4px; margin-top: 1px; }
.prints label { display: flex; align-items: center; gap: 6px; height: 14px; white-space: nowrap; }
.prints input { appearance: none; width: 11px; height: 11px; border: 1px solid #d4d0c8; border-top: 2px solid #666; border-left: 2px solid #666; background: #fff; }
.actions { display: flex; align-items: flex-start; gap: 3px; padding: 1px 0 0 0; }
.actions .btn { height: 21px; }
.actions .mark { margin-right: 14px; }
.save-callout { margin-top: -4px; }
.save-callout .btn { width: 39px; }
.place { gap: 3px; width: 109px; font: bold 12px/14px "Liberation Sans", Arial, sans-serif; }
.place svg { width: 13px; height: 15px; }
.cancel { width: 79px; padding-left: 8px; }
.close { width: 47px; }

/* BOM window */
.dialog { position: absolute; left: 509px; top: 291px; width: 847px; height: 497px; display: flex; flex-direction: column; padding: 0 1px; border: 3px solid #ea8a1a; background: #fbfbfb; box-shadow: inset 2px 0 #dcd9d2, inset -2px 0 #dcd9d2; }
.mark-three { position: absolute; left: 848px; top: 190px; }
.titlebar { display: flex; align-items: center; height: 15px; padding: 0 3px 0 2px; background: #0a246a; color: #fff; }
.titlebar span { margin-right: auto; font: bold 10px/13px "DejaVu Sans", sans-serif; }
.win { display: grid; place-items: center; width: 15px; height: 12px; margin-left: 1px; border: 1px solid #fff; border-right-color: #555; border-bottom-color: #555; background: #d4d0c8; }
.win.last { margin-left: 2px; }
.win svg { width: 10px; height: 9px; }
.dialog .group { display: flex; flex-direction: column; margin: 0 5px 0 3px; padding: 0 5px 0 4px; }
.dialog legend { margin-left: 1px; padding: 0 3px; line-height: 13px; }
.dialog .assembly { height: 38px; margin-top: 5px; }
.assembly-row { display: grid; grid-template-columns: 34px 181px 46px 1fr 48px 97px; column-gap: 5px; align-items: center; height: 17px; text-align: right; }
.dialog .items { height: 187px; margin-top: 4px; padding-top: 5px; padding-bottom: 4px; }
.dialog .items .grid-wrap { flex: none; height: 165px; }
.dialog .others .grid-wrap { flex: none; height: 74px; margin-top: 3px; }
.dialog .others { height: 108px; margin-top: 6px; }
.dialog .grid th { color: #d3dfdf; }
.dialog .grid td { height: 16px; line-height: 12px; }
.selected td { border-top: 1px dotted #111; border-bottom: 1px dotted #111; background: #7a9ae0; color: #fff; }
.grid .selected td.sunk { border-top: 1px dotted #111; border-left-color: #30406a; }
.selected a { text-decoration: underline; }
.other-search { display: flex; align-items: center; justify-content: flex-end; gap: 8px; height: 17px; font: 9px/12px "Liberation Sans", Arial, sans-serif; }
.other-search .box { width: 99px; margin-right: 4px; }
.other-search .box + label + .box { width: 81px; margin-left: -2px; margin-right: 0; }
.other-search .btn { width: 31px; }
.dialog-foot { display: flex; justify-content: space-between; padding: 8px 14px 0 6px; }
.dialog-stock { display: flex; align-items: center; gap: 5px; height: 20px; margin-top: -3px; }
.dialog-stock button { display: grid; place-items: center; width: 28px; height: 20px; border: 1px solid #999; background: #d4d0c8; }
.dialog-stock svg { width: 16px; height: 14px; }
.costs { display: grid; grid-template-columns: auto 93px; grid-auto-rows: 16px; gap: 6px 5px; align-items: center; text-align: right; }
.costs .box { text-align: right; }
.dialog-actions { display: flex; justify-content: flex-end; gap: 6px; margin: auto 5px 1px; }
.dialog-actions .btn { width: 62px; height: 20px; }
</style>
